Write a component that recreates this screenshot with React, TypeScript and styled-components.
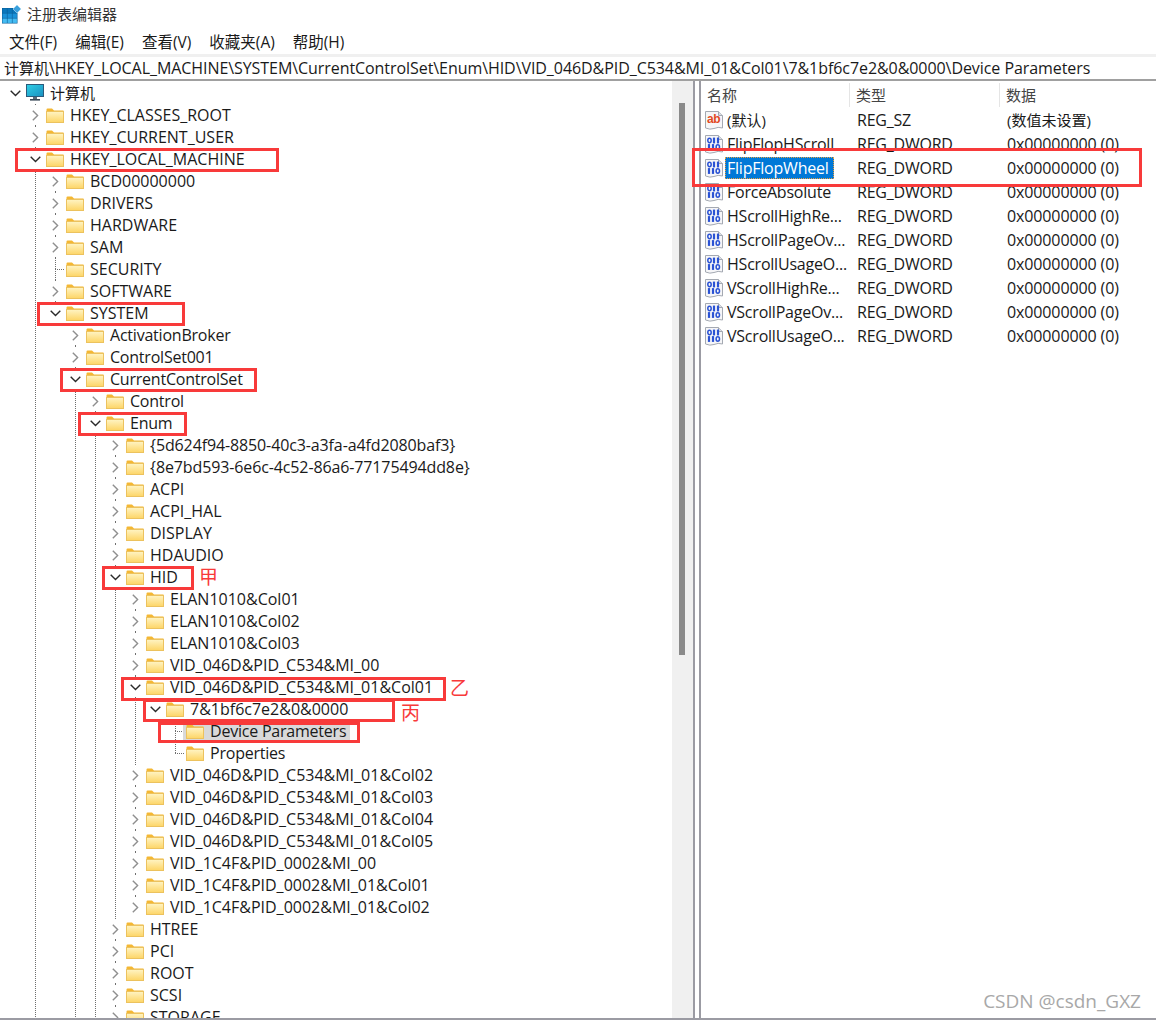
import React from "react";
import styled, { createGlobalStyle } from "styled-components";

const UI_FONT = `"Open Sans", "Noto Sans CJK SC", sans-serif`;

const Global = createGlobalStyle`
  html, body { margin: 0; padding: 0; background: #fff; }
  * { box-sizing: border-box; }
`;

const Window = styled.div`
  position: relative;
  width: 1156px;
  height: 1021px;
  padding-bottom: 1px;
  display: flex;
  flex-direction: column;
  overflow: hidden;
  background: #fff;
  font: 16px/22px ${UI_FONT};
  color: #1a1a1a;
`;

const TitleBar = styled.div`
  height: 30px;
  flex: none;
  display: flex;
  align-items: center;
  gap: 6px;
  padding: 0 0 1px 2px;
  font-size: 15px;
  color: #333;
`;

const TitleText = styled.span`
  margin-top: -1px;
`;

const MenuBar = styled.div`
  height: 24px;
  flex: none;
  display: flex;
  align-items: center;
  gap: 18px;
  padding: 0 0 0 9px;
  font-size: 15.5px;
`;

const MenuItem = styled.span`
  white-space: nowrap;
`;

const AddressBar = styled.div`
  height: 24px;
  flex: none;
  margin-top: 3px;
  padding-left: 4px;
  border-bottom: 2px solid #a0a0a0;
  box-shadow: 0 -3px 0 #f0f0f0;
  white-space: nowrap;
  display: flex;
  align-items: center;
  letter-spacing: -0.065px;
`;

const Cjk = styled.span`
  font-size: 15px;
  letter-spacing: 0;
`;

const Panes = styled.div`
  flex: 1;
  min-height: 0;
  display: flex;
  border-bottom: 2px solid #9b9ba3;
`;

const TreePane = styled.div`
  width: 695px;
  flex: none;
  display: flex;
  border-right: 2px solid #9b9ba3;
`;

const TreeScroll = styled.div`
  flex: 1;
  min-width: 0;
  overflow: hidden;
  padding: 1px 0 0 5px;
`;

const Track = styled.div`
  width: 21px;
  flex: none;
  background: #f0f0f0;
  padding: 22px 8px 0 7px;
`;

const Thumb = styled.div`
  height: 552px;
  background: #8a8a8a;
`;

const Row = styled.div`
  height: 22px;
  display: flex;
  align-items: stretch;
  white-space: nowrap;
`;

const dots = `repeating-linear-gradient(to bottom, #6e6e6e 0 1px, transparent 1px 2px)`;

const Indent = styled.div<{ $line: boolean }>`
  width: 20px;
  flex: none;
  background: ${(p) => (p.$line ? `${dots} no-repeat 10px 0 / 1px 100%` : "none")};
`;

const Expander = styled.div<{ $up: boolean; $down: boolean }>`
  width: 20px;
  flex: none;
  display: flex;
  align-items: center;
  justify-content: center;
  background:
    ${(p) => (p.$up ? `${dots} no-repeat 10px 0 / 1px 11px,` : "")}
    ${(p) => (p.$down ? `${dots} no-repeat 10px 11px / 1px 11px,` : "")}
    none;
`;

const Connector = styled.div<{ $up: boolean; $down: boolean }>`
  width: 20px;
  flex: none;
  background:
    repeating-linear-gradient(to right, #6e6e6e 0 1px, transparent 1px 2px) no-repeat 10px 11px / 10px 1px,
    ${(p) => (p.$up ? `${dots} no-repeat 10px 0 / 1px 11px,` : "")}
    ${(p) => (p.$down ? `${dots} no-repeat 10px 11px / 1px 11px,` : "")}
    none;
`;

const ChevronMask = styled.div`
  width: 16px;
  height: 18px;
  background: #fff;
  display: flex;
  align-items: center;
  justify-content: center;
`;

const Node = styled.div<{ $selected?: boolean }>`
  display: flex;
  align-items: center;
  gap: 6px;
  margin-left: ${(p) => (p.$selected ? "-2px" : "1px")};
  padding: ${(p) => (p.$selected ? "0 4px 0 3px" : "0")};
  background: ${(p) => (p.$selected ? "#d9d9d9" : "transparent")};
`;

const FIT_CSS: Record<string, string> = {
  cjk: "font-size: 15px;",
  tight: "letter-spacing: -0.22px;",
  snug: "letter-spacing: -0.12px;",
};

const Label = styled.span<{ $fit?: Fit }>`
  ${(p) => (p.$fit ? FIT_CSS[p.$fit] : "")}
`;

const ListPane = styled.div`
  flex: 1;
  margin-left: 4px;
  border-left: 2px solid #9b9ba3;
  min-width: 0;
`;

const ListHeader = styled.div`
  height: 27px;
  display: grid;
  grid-template-columns: 149px 150px 1fr;
  color: #444;
  font-size: 15px;
`;

const HeaderCell = styled.div`
  padding-left: 6px;
  display: flex;
  align-items: center;
  border-right: 1px solid #e5e5e5;
  height: 24px;
  margin-top: 2px;
  &:last-child { border-right: 0; }
`;

const ListRow = styled.div`
  height: 24px;
  display: grid;
  grid-template-columns: 149px 150px 1fr;
  align-items: center;
`;

const NameCell = styled.div`
  display: flex;
  align-items: center;
  gap: 4px;
  padding-left: 4px;
  white-space: nowrap;
`;

const NameText = styled(Label)<{ $selected?: boolean }>`
  ${(p) =>
    p.$selected
      ? `
    background: #0078d7;
    color: #fff;
    outline: 1px dotted #e8a040;
    outline-offset: -1px;
    margin-left: -2px;
    padding: 0 5px 0 2px;
  `
      : ""}
`;

const ValueCell = styled(Label)`
  padding-left: 7px;
  white-space: nowrap;
`;

const Mark = styled.div<{ $x: number; $y: number; $w: number; $h: number }>`
  position: absolute;
  left: ${(p) => p.$x}px;
  top: ${(p) => p.$y}px;
  width: ${(p) => p.$w}px;
  height: ${(p) => p.$h}px;
  border: 3px solid #f83a3a;
  pointer-events: none;
`;

const Note = styled.div<{ $x: number; $y: number }>`
  position: absolute;
  left: ${(p) => p.$x}px;
  top: ${(p) => p.$y}px;
  font-size: 19px;
  line-height: 20px;
  color: #f83a3a;
`;

const Watermark = styled.div`
  position: absolute;
  right: 15px;
  bottom: 8px;
  font-size: 19px;
  line-height: 24px;
  color: #a8a8a8;
`;

const CELL_COLORS = ["#0b78bc", "#1b92d8", "#45bcf2"];

const AppIcon = () => (
  <svg width="19" height="19" viewBox="0 0 19 19">
    <rect x="0" y="3" width="15.5" height="15.5" fill="#0a5f9a" />
    {[0.5, 5.5, 10.5].map((x) =>
      [3.5, 8.5, 13.5].map((y, row) => <rect key={`${x}-${y}`} x={x} y={y} width="4.4" height="4.4" fill={CELL_COLORS[row]} />)
    )}
    <path d="M15 0 L19 4 L15 8 L11 4 Z" fill="#3aa0dc" stroke="#a8d8f2" strokeWidth="0.7" />
  </svg>
);

const ComputerIcon = () => (
  <svg width="18" height="18" viewBox="0 0 18 18">
    <defs>
      <linearGradient id="screen" x1="0" y1="0" x2="1" y2="1">
        <stop offset="0" stopColor="#2fd0e6" />
        <stop offset="1" stopColor="#1a8fc0" />
      </linearGradient>
    </defs>
    <rect x="0.5" y="0.5" width="17" height="12" fill="url(#screen)" stroke="#2c5a7a" />
    <rect x="7" y="13" width="4" height="2" fill="#5a6a78" />
    <rect x="4" y="15" width="10" height="1.6" fill="#3a4a58" />
  </svg>
);

const FolderIcon = () => (
  <svg width="18" height="15" viewBox="0 0 18 15">
    <defs>
      <linearGradient id="folderBody" x1="0" y1="0" x2="0" y2="1">
        <stop offset="0" stopColor="#fff4c4" />
        <stop offset="1" stopColor="#fdd566" />
      </linearGradient>
    </defs>
    <path d="M0.5 14.5 V1.5 Q0.5 0.5 1.5 0.5 H6 L8 2.5 H17.5 V14.5 Z" fill="#f4b733" />
    <rect x="0.5" y="3.5" width="17" height="11" fill="url(#folderBody)" stroke="#ecc25e" strokeWidth="1" />
  </svg>
);

const RegPage = ({ children }: { children: React.ReactNode }) => (
  <svg width="18" height="19" viewBox="0 0 18 19" style={{ flex: "none" }}>
    <path d="M0.5 0.5 H13.5 L17.5 4.5 V17 Q13 15.5 9 17.5 Q5 19 0.5 17 Z" fill="#f6f6f8" stroke="#a4a9b2" />
    <path d="M13.5 0.5 V4.5 H17.5" fill="#dcdfe4" stroke="#a4a9b2" />
    {children}
  </svg>
);

const StringIcon = () => (
  <RegPage>
    <text x="2" y="12" fontFamily="Liberation Sans, sans-serif" fontWeight="700" fontSize="12" letterSpacing="-0.4" fill="#e2491f">
      ab
    </text>
  </RegPage>
);

const Zero = ({ x, y }: { x: number; y: number }) => (
  <ellipse cx={x} cy={y} rx="1.7" ry="2.2" fill="none" stroke="#2a52d4" strokeWidth="1.5" />
);
const One = ({ x, y }: { x: number; y: number }) => <rect x={x - 1.1} y={y - 2.9} width="2.2" height="5.8" fill="#2a52d4" />;

const BinaryIcon = () => (
  <RegPage>
    <Zero x={4.5} y={5.5} />
    <One x={9} y={5.5} />
    <One x={13} y={5.5} />
    <One x={4} y={12} />
    <One x={8} y={12} />
    <Zero x={12.8} y={12} />
  </RegPage>
);

const Chevron = ({ open }: { open: boolean }) =>
  open ? (
    <svg width="11" height="7" viewBox="0 0 11 7">
      <path d="M0.7 0.8 L5.5 5.6 L10.3 0.8" fill="none" stroke="#2a2a2a" strokeWidth="1.4" />
    </svg>
  ) : (
    <svg width="7" height="11" viewBox="0 0 7 11">
      <path d="M0.8 0.7 L5.6 5.5 L0.8 10.3" fill="none" stroke="#8f8f8f" strokeWidth="1.4" />
    </svg>
  );

type Fit = "cjk" | "tight" | "snug" | undefined;

const fitOf = (text: string): Fit => {
  if (/[\u4e00-\u9fff]/.test(text)) return "cjk";
  if (/\{|^0x/.test(text)) return "snug";
  if (/[a-z]{3}|REG_/.test(text)) return "tight";
  return undefined;
};

type Kind = "open" | "closed" | "leaf";
type TreeItem = { depth: number; label: string; kind: Kind; selected?: boolean };

const c = (depth: number, ...labels: string[]): TreeItem[] => labels.map((label) => ({ depth, label, kind: "closed" as Kind }));
const o = (depth: number, label: string): TreeItem => ({ depth, label, kind: "open" });
const l = (depth: number, label: string, selected?: boolean): TreeItem => ({ depth, label, kind: "leaf", selected });

const TREE: TreeItem[] = [
  o(0, "计算机"),
  ...c(1, "HKEY_CLASSES_ROOT", "HKEY_CURRENT_USER"),
  o(1, "HKEY_LOCAL_MACHINE"),
  ...c(2, "BCD00000000", "DRIVERS", "HARDWARE", "SAM"),
  l(2, "SECURITY"),
  ...c(2, "SOFTWARE"),
  o(2, "SYSTEM"),
  ...c(3, "ActivationBroker", "ControlSet001"),
  o(3, "CurrentControlSet"),
  ...c(4, "Control"),
  o(4, "Enum"),
  ...c(5, "{5d624f94-8850-40c3-a3fa-a4fd2080baf3}", "{8e7bd593-6e6c-4c52-86a6-77175494dd8e}", "ACPI", "ACPI_HAL", "DISPLAY", "HDAUDIO"),
  o(5, "HID"),
  ...c(6, "ELAN1010&Col01", "ELAN1010&Col02", "ELAN1010&Col03", "VID_046D&PID_C534&MI_00"),
  o(6, "VID_046D&PID_C534&MI_01&Col01"),
  o(7, "7&1bf6c7e2&0&0000"),
  l(8, "Device Parameters", true),
  l(8, "Properties"),
  ...c(
    6,
    "VID_046D&PID_C534&MI_01&Col02",
    "VID_046D&PID_C534&MI_01&Col03",
    "VID_046D&PID_C534&MI_01&Col04",
    "VID_046D&PID_C534&MI_01&Col05",
    "VID_1C4F&PID_0002&MI_00",
    "VID_1C4F&PID_0002&MI_01&Col01",
    "VID_1C4F&PID_0002&MI_01&Col02"
  ),
  ...c(5, "HTREE", "PCI", "ROOT", "SCSI", "STORAGE", "SWD"),
  ...c(4, "Hardware Profiles"),
  ...c(3, "Services"),
  ...c(1, "HKEY_USERS", "HKEY_CURRENT_CONFIG"),
];

const hasNextAt = (i: number, col: number) => {
  for (let j = i + 1; j < TREE.length; j++) {
    if (TREE[j].depth === col) return true;
    if (TREE[j].depth < col) return false;
  }
  return false;
};

const VALUES: { name: string; type: string; data: string; str?: boolean; selected?: boolean }[] = [
  { name: "(默认)", type: "REG_SZ", data: "(数值未设置)", str: true },
  { name: "FlipFlopHScroll", type: "REG_DWORD", data: "0x00000000 (0)" },
  { name: "FlipFlopWheel", type: "REG_DWORD", data: "0x00000000 (0)", selected: true },
  { name: "ForceAbsolute", type: "REG_DWORD", data: "0x00000000 (0)" },
  { name: "HScrollHighRe...", type: "REG_DWORD", data: "0x00000000 (0)" },
  { name: "HScrollPageOv...", type: "REG_DWORD", data: "0x00000000 (0)" },
  { name: "HScrollUsageO...", type: "REG_DWORD", data: "0x00000000 (0)" },
  { name: "VScrollHighRe...", type: "REG_DWORD", data: "0x00000000 (0)" },
  { name: "VScrollPageOv...", type: "REG_DWORD", data: "0x00000000 (0)" },
  { name: "VScrollUsageO...", type: "REG_DWORD", data: "0x00000000 (0)" },
];

const MARKS = [
  { x: 15, y: 148, w: 264, h: 24 },
  { x: 37, y: 302, w: 148, h: 24 },
  { x: 60, y: 368, w: 197, h: 24 },
  { x: 78, y: 412, w: 109, h: 24 },
  { x: 102, y: 566, w: 92, h: 24 },
  { x: 121, y: 677, w: 325, h: 24 },
  { x: 143, y: 699, w: 252, h: 23 },
  { x: 158, y: 722, w: 202, h: 21 },
  { x: 692, y: 148, w: 450, h: 39 },
];

const NOTES = [
  { x: 199, y: 567, t: "甲" },
  { x: 450, y: 678, t: "乙" },
  { x: 401, y: 703, t: "丙" },
];

export default function App() {
  return (
    <Window>
      <Global />
      <TitleBar>
        <AppIcon />
        <TitleText>注册表编辑器</TitleText>
      </TitleBar>
      <MenuBar>
        {["文件(F)", "编辑(E)", "查看(V)", "收藏夹(A)", "帮助(H)"].map((m) => (
          <MenuItem key={m}>{m}</MenuItem>
        ))}
      </MenuBar>
      <AddressBar>
        <Cjk>计算机</Cjk>\HKEY_LOCAL_MACHINE\SYSTEM\CurrentControlSet\Enum\HID\VID_046D&amp;PID_C534&amp;MI_01&amp;Col01\7&amp;1bf6c7e2&amp;0&amp;0000\Device Parameters
      </AddressBar>
      <Panes>
        <TreePane>
          <TreeScroll>
            {TREE.map((item, i) => (
              <Row key={item.label + i}>
                {Array.from({ length: item.depth }, (_, col) => (
                  <Indent key={col} $line={hasNextAt(i, col)} />
                ))}
                {item.kind === "leaf" ? (
                  <Connector $up $down={hasNextAt(i, item.depth)} />
                ) : (
                  <Expander $up={item.depth > 0} $down={hasNextAt(i, item.depth)}>
                    <ChevronMask>
                      <Chevron open={item.kind === "open"} />
                    </ChevronMask>
                  </Expander>
                )}
                <Node $selected={item.selected}>
                  {item.depth === 0 ? <ComputerIcon /> : <FolderIcon />}
                  <Label $fit={fitOf(item.label)}>{item.label}</Label>
                </Node>
              </Row>
            ))}
          </TreeScroll>
          <Track>
            <Thumb />
          </Track>
        </TreePane>
        <ListPane>
          <ListHeader>
            <HeaderCell>名称</HeaderCell>
            <HeaderCell>类型</HeaderCell>
            <HeaderCell>数据</HeaderCell>
          </ListHeader>
          {VALUES.map((v) => (
            <ListRow key={v.name}>
              <NameCell>
                {v.str ? <StringIcon /> : <BinaryIcon />}
                <NameText $selected={v.selected} $fit={fitOf(v.name)}>
                  {v.name}
                </NameText>
              </NameCell>
              <ValueCell $fit={fitOf(v.type)}>{v.type}</ValueCell>
              <ValueCell $fit={fitOf(v.data)}>{v.data}</ValueCell>
            </ListRow>
          ))}
        </ListPane>
      </Panes>
      {MARKS.map((m) => (
        <Mark key={`${m.x}-${m.y}`} $x={m.x} $y={m.y} $w={m.w} $h={m.h} />
      ))}
      {NOTES.map((n) => (
        <Note key={n.t} $x={n.x} $y={n.y}>
          {n.t}
        </Note>
      ))}
      <Watermark>CSDN @csdn_GXZ</Watermark>
    </Window>
  );
}
